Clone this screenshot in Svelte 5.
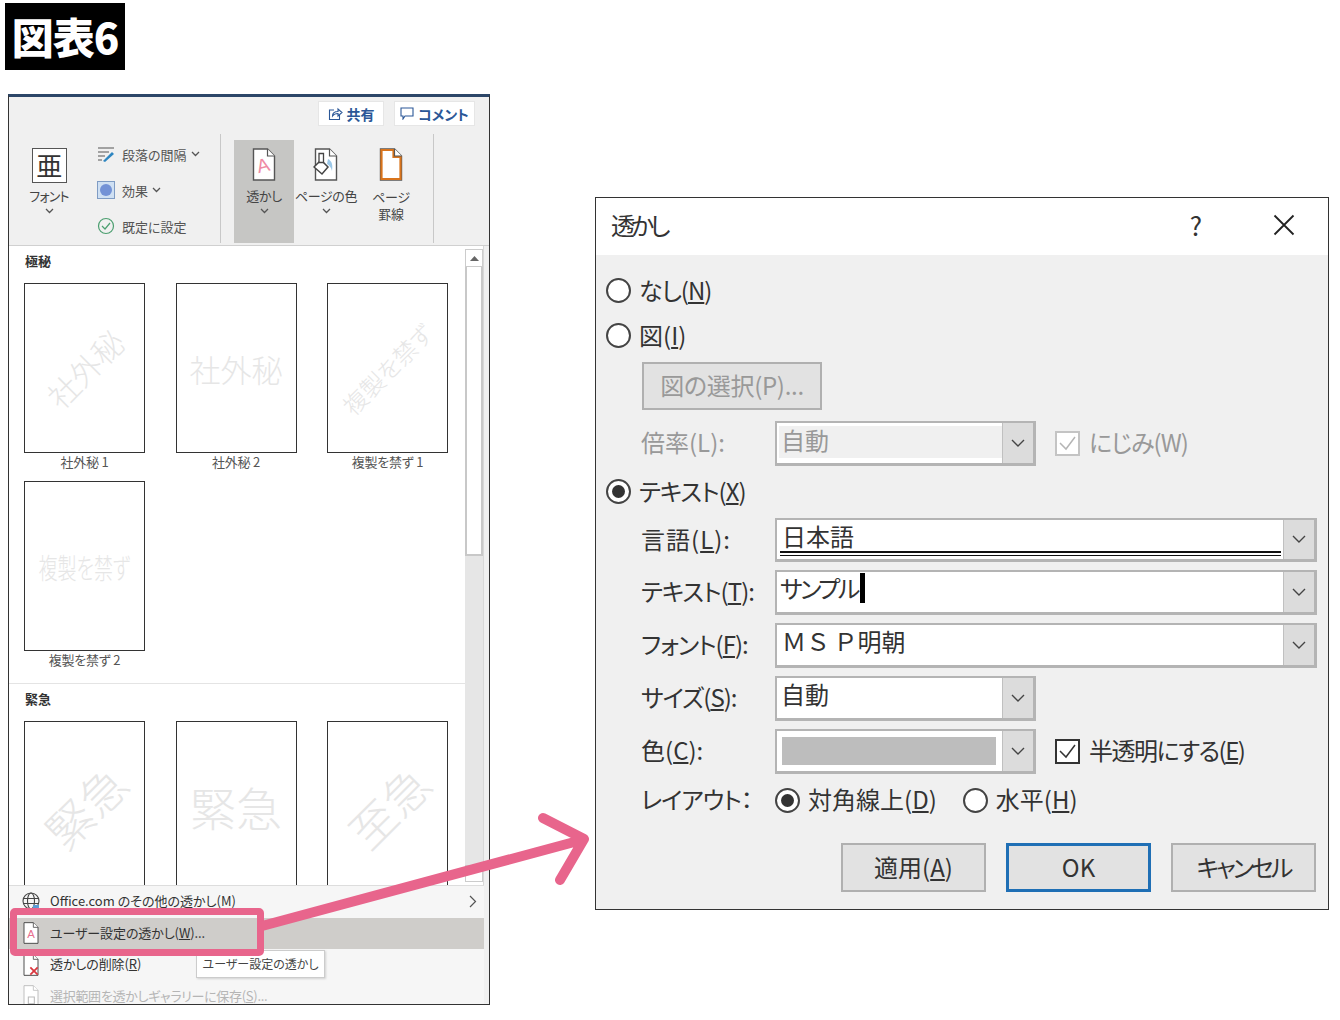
<script lang="ts">
	const groups = [
		{
			title: '極秘',
			items: [
				{ mark: '社外秘', caption: '社外秘 1', cls: 'diag big' },
				{ mark: '社外秘', caption: '社外秘 2', cls: 'flat big' },
				{ mark: '複製を禁ず', caption: '複製を禁ず 1', cls: 'diag mid' },
				{ mark: '複製を禁ず', caption: '複製を禁ず 2', cls: 'flat tall' }
			]
		},
		{
			title: '緊急',
			items: [
				{ mark: '緊急', cls: 'diag huge' },
				{ mark: '緊急', cls: 'flat huge' },
				{ mark: '至急', cls: 'diag huge' }
			]
		}
	];
</script>

{#snippet chevron()}
	<svg class="chev" width="9" height="6" viewBox="0 0 9 6"><path d="M1 1l3.5 3.5L8 1" fill="none" stroke="#555" stroke-width="1.3" /></svg>
{/snippet}

{#snippet caret()}
	<span class="caret">
		<svg width="14" height="9" viewBox="0 0 14 9"><path d="M1 1l6 6 6-6" fill="none" stroke="#444" stroke-width="1.4" /></svg>
	</span>
{/snippet}

{#snippet radio(checked: boolean)}
	<span class="radio" class:checked></span>
{/snippet}

{#snippet pageIcon(stroke: string)}
	<path d="M1.5 1h14l7 7v24h-21z" fill="#fff" stroke={stroke} stroke-width="1.4" />
	<path d="M15.5 1v7h7" fill="#fff" stroke={stroke} stroke-width="1.2" />
{/snippet}

<div class="page">
	<div class="badge">図表6</div>

	<div class="columns">
		<section class="word">
			<div class="ribbon">
				<div class="share-row">
					<button class="share">
						<svg width="15" height="14" viewBox="0 0 15 14"><path d="M6 3H1.5v9.5h10V8M4.5 9c0-3 2-4.5 5.5-4.5V2l4 3.500-4 3.500V6.500C7.500 6.500 5.500 7.500 4.500 9z" fill="none" stroke="#2b5797" stroke-width="1.100" /></svg>
						共有
					</button>
					<button class="share comment">
						<svg width="14" height="13" viewBox="0 0 14 13"><path d="M1 1h12v8H5l-2 3V9H1z" fill="none" stroke="#2b5797" stroke-width="1.100" /></svg>
						コメント
					</button>
				</div>
				<div class="tools">
					<div class="tool-group first">
						<div class="big-btn font-btn">
							<span class="font-box">亜</span>
							<span class="narrow-label">フォント</span>
							{@render chevron()}
						</div>
						<div class="small-col">
							<div class="small-btn">
								<svg width="18" height="18" viewBox="0 0 18 18"><path d="M1 3h16M1 7h11M1 11h7M1 15h4" stroke="#555" stroke-width="1.200" /><path d="M6 16l9-9 2 2-9 8z" fill="#2e86c1" /></svg>
								段落の間隔 {@render chevron()}
							</div>
							<div class="small-btn">
								<span class="effect"><i></i></span>
								効果 {@render chevron()}
							</div>
							<div class="small-btn">
								<svg width="18" height="18" viewBox="0 0 18 18"><circle cx="9" cy="9" r="7.500" fill="none" stroke="#4c9f70" stroke-width="1.200" /><path d="M5 9l3 3 5-6" fill="none" stroke="#4c9f70" stroke-width="1.200" /></svg>
								既定に設定
							</div>
						</div>
					</div>
					<div class="tool-group second">
						<div class="big-btn wm-btn active">
							<svg width="24" height="33" viewBox="0 0 24 33">
								{@render pageIcon('#555')}
								<text x="11" y="24" font-size="19" text-anchor="middle" fill="#ef8aa4" font-family="Liberation Sans" transform="rotate(-14 11 18)">A</text>
							</svg>
							<span>透かし</span>
							{@render chevron()}
						</div>
						<div class="big-btn color-btn">
							<svg width="26" height="33" viewBox="0 0 24 33">
								{@render pageIcon('#555')}
								<path d="M0 19l7-7 7 7-6 7z" fill="#fff" stroke="#444" stroke-width="1.500" />
								<path d="M5 5.500h4.500v9H5z" fill="#fff" stroke="#444" stroke-width="1.300" />
								<path d="M14 11c4 2 5 6 4 12-1-4-3-6-5-7z" fill="#9cc8e8" />
							</svg>
							<span>ページの色</span>
							{@render chevron()}
						</div>
						<div class="big-btn border-btn">
							<svg width="24" height="33" viewBox="0 0 24 33">
								{@render pageIcon('#555')}
								<path d="M2.500 2h12v7h7v22h-19z" fill="#fff" stroke="#d9741c" stroke-width="2.200" />
								<path d="M15.500 1v7h7" fill="#fff" stroke="#555" stroke-width="1.200" />
							</svg>
							<span>ページ<br />罫線</span>
						</div>
					</div>
				</div>
			</div>

			<div class="gallery">
				<div class="gallery-scroll">
					{#each groups as group}
						<div class="gallery-group">
							<h4>{group.title}</h4>
							<div class="thumbs">
								{#each group.items as item}
									<figure>
										<div class="thumb"><span class={item.cls}>{item.mark}</span></div>
										{#if item.caption}<figcaption>{item.caption}</figcaption>{/if}
									</figure>
								{/each}
							</div>
						</div>
					{/each}
				</div>
				<div class="scrollbar">
					<span class="arrow-btn"><svg width="9" height="5" viewBox="0 0 9 5"><path d="M4.500 0L9 5H0z" fill="#666" /></svg></span>
					<span class="thumb-bar"></span>
					<span class="track"></span>
					<span class="arrow-btn down"></span>
				</div>
			</div>

			<ul class="menu">
				<li class="office">
					<svg width="20" height="20" viewBox="0 0 20 20"><g fill="none" stroke="#444" stroke-width="1.100"><circle cx="10" cy="9" r="8" /><ellipse cx="10" cy="9" rx="3.500" ry="8" /><path d="M2 6.500h16M2 11.500h16" /></g><path d="M12 13h6v4h-6z" fill="#5b9bd5" /></svg>
					<span>Office.com のその他の透かし(M)</span>
					<svg class="more" width="8" height="13" viewBox="0 0 8 13"><path d="M1 1l5.500 5.500L1 12" fill="none" stroke="#555" stroke-width="1.200" /></svg>
				</li>
				<li class="hover">
					<svg width="20" height="22" viewBox="0 0 24 33">
						{@render pageIcon('#444')}
						<text x="12" y="24" font-size="17" text-anchor="middle" fill="#e8708f" font-family="Liberation Sans">A</text>
					</svg>
					<span>ユーザー設定の透かし(<u>W</u>)...</span>
				</li>
				<li>
					<svg width="20" height="22" viewBox="0 0 24 33">
						{@render pageIcon('#444')}
						<path d="M11 20l11 11M22 20L11 31" stroke="#d9363e" stroke-width="2.600" />
					</svg>
					<span>透かしの削除(<u>R</u>)</span>
				</li>
				<li class="disabled">
					<svg width="20" height="22" viewBox="0 0 24 33">
						{@render pageIcon('#bbb')}
						<path d="M8 18h9v10H8z" fill="none" stroke="#bbb" stroke-width="1.600" />
					</svg>
					<span>選択範囲を透かしギャラリーに保存(<u>S</u>)...</span>
				</li>
			</ul>
			<div class="tooltip">ユーザー設定の透かし</div>
		</section>

		<section class="dialog">
			<header>
				<span class="dlg-title">透かし</span>
				<span class="help">?</span>
				<svg class="close" width="22" height="22" viewBox="0 0 22 22"><path d="M1.500 1.500l19 19M20.500 1.500l-19 19" stroke="#222" stroke-width="1.800" /></svg>
			</header>
			<div class="dlg-body">
				<div class="opt none">{@render radio(false)}<span class="tight">なし(<u>N</u>)</span></div>
				<div class="opt pic">{@render radio(false)}<span>図(<u>I</u>)</span></div>
				<button class="pick" disabled>図の選択(P)...</button>

				<div class="field scale off">
					<label>倍率(L):</label>
					<div class="combo narrow disabled"><span class="val">自動</span>{@render caret()}</div>
					<span class="check disabled">
						<svg width="19" height="17" viewBox="0 0 19 17"><path d="M2 8l6 6L17 2" fill="none" stroke="#b5b5b5" stroke-width="1.500" /></svg>
					</span>
					<span class="side tight">にじみ(W)</span>
				</div>

				<div class="opt text">{@render radio(true)}<span class="tight">テキスト(<u>X</u>)</span></div>

				<div class="field lang">
					<label class="wide-label">言語(<u>L</u>):</label>
					<div class="combo wide"><span class="val lined">日本語</span>{@render caret()}</div>
				</div>
				<div class="field">
					<label class="tight">テキスト(<u>T</u>):</label>
					<div class="combo wide"><span class="val sample">サンプル<i class="cursor"></i></span>{@render caret()}</div>
				</div>
				<div class="field">
					<label class="tight">フォント(<u>F</u>):</label>
					<div class="combo wide"><span class="val mincho">ＭＳ Ｐ明朝</span>{@render caret()}</div>
				</div>
				<div class="field">
					<label class="tight">サイズ(<u>S</u>):</label>
					<div class="combo narrow"><span class="val">自動</span>{@render caret()}</div>
				</div>
				<div class="field">
					<label>色(<u>C</u>):</label>
					<div class="combo narrow"><span class="swatch"></span>{@render caret()}</div>
					<span class="check">
						<svg width="19" height="17" viewBox="0 0 19 17"><path d="M2 8l6 6L17 2" fill="none" stroke="#333" stroke-width="1.500" /></svg>
					</span>
					<span class="side tighter">半透明にする(<u>E</u>)</span>
				</div>
				<div class="field layout">
					<label class="tight">レイアウト：</label>
					{@render radio(true)}
					<span class="lay-label">対角線上(<u>D</u>)</span>
					{@render radio(false)}
					<span class="side">水平(<u>H</u>)</span>
				</div>

				<div class="actions">
					<button>適用(<u>A</u>)</button>
					<button class="primary">OK</button>
					<button class="cancel">キャンセル</button>
				</div>
			</div>
		</section>
	</div>

	<div class="callout"></div>
	<svg class="arrow" width="1340" height="1020" viewBox="0 0 1340 1020">
		<path d="M262 926L578 841M543 818l41 21-24 41" fill="none" stroke="#e8658c" stroke-width="10" stroke-linecap="round" stroke-linejoin="round" />
	</svg>
</div>

<style>
	:global(body) {
		background: #fff;
	}
	.page {
		position: relative;
		width: 1340px;
		height: 1020px;
		overflow: hidden;
		font-family: 'Noto Sans CJK JP', 'Noto Sans', sans-serif;
		font-feature-settings: 'palt';
		color: #333;
	}
	.badge {
		width: 120px;
		height: 67px;
		margin: 3px 0 0 5px;
		background: #000;
		color: #fff;
		font-size: 42px;
		font-weight: 900;
		line-height: 65px;
		text-align: center;
		letter-spacing: -1px;
	}
	.columns {
		display: flex;
		align-items: flex-start;
		margin: 24px 0 0 8px;
	}

	/* ── Word panel ── */
	.word {
		position: relative;
		width: 482px;
		height: 911px;
		box-sizing: border-box;
		border: 1px solid #333;
		border-top: 3px solid #2c4668;
		background: #f0f0f0;
		overflow: hidden;
		display: flex;
		flex-direction: column;
		font-size: 13px;
	}
	.ribbon {
		height: 149px;
		flex: none;
		border-bottom: 1px solid #d0d0d0;
		box-sizing: border-box;
	}
	.share-row {
		display: flex;
		justify-content: flex-end;
		gap: 10px;
		padding: 4px 14px 0 0;
	}
	.share {
		width: 66px;
		height: 25px;
		border: 1px solid #e6e6e6;
		background: #fff;
		display: flex;
		align-items: center;
		justify-content: center;
		gap: 4px;
		padding: 0;
		font: 700 14px 'Noto Sans CJK JP', sans-serif;
		font-feature-settings: 'palt';
		color: #2b5797;
	}
	.share.comment {
		width: 81px;
	}
	.tools {
		display: flex;
		height: 109px;
		margin-top: 8px;
	}
	.tool-group {
		display: flex;
		border-right: 1px solid #c8c8c8;
		box-sizing: border-box;
		height: 109px;
		width: 212px;
	}
	.tool-group.first {
		gap: 23px;
		padding: 14px 0 0 15px;
	}
	.tool-group.second {
		padding: 6px 0 0 13px;
		width: 213px;
	}
	.big-btn {
		display: flex;
		flex-direction: column;
		align-items: center;
		font-size: 13px;
		line-height: 16px;
		color: #444;
		white-space: nowrap;
		letter-spacing: -0.3px;
	}
	.big-btn svg:first-child {
		margin-bottom: 7px;
	}
	.font-btn {
		width: 50px;
	}
	.narrow-label {
		letter-spacing: -0.8px;
	}
	.font-box {
		width: 35px;
		height: 35px;
		box-sizing: border-box;
		border: 1px solid #555;
		background: #fff;
		font-size: 26px;
		line-height: 32px;
		text-align: center;
		color: #333;
		margin-bottom: 5px;
	}
	.wm-btn {
		width: 60px;
		height: 103px;
		padding-top: 8px;
		box-sizing: border-box;
	}
	.wm-btn.active {
		background: #c6c6c4;
	}
	.color-btn {
		width: 62px;
		padding-top: 8px;
		margin-left: 1px;
		letter-spacing: -0.4px;
	}
	.border-btn {
		width: 64px;
		padding-top: 8px;
		margin-left: 2px;
		text-align: center;
		line-height: 17px;
	}
	.chev {
		margin-top: 4px;
		flex: none;
	}
	.small-col {
		display: flex;
		flex-direction: column;
		gap: 18px;
		margin-top: -3px;
	}
	.small-btn {
		display: flex;
		align-items: center;
		gap: 7px;
		height: 18px;
		color: #555;
		white-space: nowrap;
	}
	.small-btn .chev {
		margin: 0 0 0 -3px;
	}
	.effect {
		width: 18px;
		height: 18px;
		box-sizing: border-box;
		background: #cfe0f3;
		border: 1px solid #7f9cc4;
		display: flex;
		align-items: center;
		justify-content: center;
	}
	.effect i {
		width: 12px;
		height: 12px;
		border-radius: 50%;
		background: #7392d6;
	}

	.gallery {
		position: relative;
		height: 639px;
		flex: none;
		width: 475px;
		background: #fff;
		border-right: 1px solid #d8d8d8;
		overflow: hidden;
		box-sizing: border-box;
		display: flex;
	}
	.gallery-scroll {
		width: 456px;
	}
	.gallery-group + .gallery-group {
		border-top: 1px solid #e4e4e4;
		margin-top: 12px;
	}
	.gallery-group h4 {
		margin: 0;
		height: 37px;
		padding: 6px 0 0 16px;
		box-sizing: border-box;
		font-size: 13px;
		line-height: 18px;
		font-weight: 700;
		color: #333;
	}
	.thumbs {
		display: grid;
		grid-template-columns: repeat(3, 121px);
		column-gap: 30.500px;
		row-gap: 8px;
		padding-left: 15px;
	}
	figure {
		margin: 0;
	}
	figcaption {
		height: 20px;
		line-height: 18px;
		text-align: center;
		font-size: 13px;
		color: #555;
		letter-spacing: -0.2px;
	}
	.thumb {
		width: 121px;
		height: 170px;
		box-sizing: border-box;
		border: 1.500px solid #333;
		background: #fff;
		display: flex;
		align-items: center;
		justify-content: center;
		overflow: hidden;
	}
	.thumb span {
		color: #e6e6e6;
		white-space: nowrap;
		font-weight: 300;
	}
	.thumb .diag {
		transform: rotate(-45deg);
	}
	.thumb .big {
		font-size: 31px;
	}
	.thumb .mid {
		font-size: 24px;
	}
	.thumb .tall {
		font-size: 19px;
		transform: scaleY(1.500);
	}
	.thumb .huge {
		font-size: 46px;
	}

	.scrollbar {
		width: 18px;
		margin-top: 3px;
		display: flex;
		flex-direction: column;
		height: 633px;
		flex: none;
	}
	.arrow-btn {
		height: 18px;
		display: flex;
		align-items: center;
		justify-content: center;
		border: 1px solid #ccc;
		box-sizing: border-box;
		flex: none;
		background: #fff;
	}
	.thumb-bar {
		height: 289px;
		box-sizing: border-box;
		border: 2px solid #c8c8c8;
		border-top-width: 0;
		background: #fff;
		flex: none;
	}
	.track {
		flex: 1;
		background: #e6e6e6;
	}
	.arrow-btn.down {
		height: 17px;
	}

	.menu {
		list-style: none;
		margin: 0;
		padding: 0;
		border-top: 1px solid #ddd;
		width: 475px;
		font-size: 13px;
		background: #f6f6f6;
		flex: 1;
		letter-spacing: -0.1px;
	}
	.menu li {
		position: relative;
		height: 31.500px;
		display: flex;
		align-items: center;
		gap: 9px;
		padding-left: 12px;
		color: #333;
		white-space: nowrap;
	}
	.menu li span {
		position: relative;
		top: -1px;
	}
	.menu li.office {
		letter-spacing: 0;
	}
	.menu li.hover {
		background: #cfcdca;
	}
	.menu li.disabled {
		color: #b5b5b5;
		letter-spacing: -0.3px;
	}
	.more {
		position: absolute;
		right: 7px;
		top: 9px;
	}
	.tooltip {
		position: absolute;
		left: 187px;
		top: 853px;
		width: 129px;
		height: 28px;
		box-sizing: border-box;
		border: 1px solid #ccc;
		box-shadow: 1px 1px 2px rgba(0, 0, 0, 0.15);
		background: #fff;
		color: #444;
		font-size: 12px;
		line-height: 25px;
		text-align: center;
		white-space: nowrap;
	}

	/* ── Dialog ── */
	.dialog {
		width: 734px;
		height: 713px;
		margin: 103px 0 0 105px;
		box-sizing: border-box;
		border: 1.500px solid #333;
		background: #f0f0f0;
		flex: none;
		font-size: 24px;
		color: #333;
	}
	header {
		height: 57px;
		background: #fff;
		display: flex;
		align-items: center;
		padding: 0 0 4px 15px;
		box-sizing: border-box;
		font-size: 24px;
	}
	.dlg-title {
		flex: 1;
		letter-spacing: -4px;
	}
	.help {
		font-size: 26px;
		font-weight: 400;
		margin-right: 71px;
	}
	.close {
		margin-right: 33px;
	}
	.dlg-body {
		height: 654px;
		padding-left: 10px;
		box-sizing: border-box;
	}
	.tight {
		letter-spacing: -1px;
	}
	.tighter {
		letter-spacing: -1.500px;
	}
	.opt {
		display: flex;
		align-items: center;
		height: 36px;
		white-space: pre;
	}
	.opt span:last-child {
		position: relative;
		top: -1px;
	}
	.opt.none {
		margin-top: 17px;
	}
	.opt.pic {
		margin-top: 9px;
	}
	.opt.text {
		margin-top: 7px;
	}
	.radio {
		width: 25px;
		height: 25px;
		box-sizing: border-box;
		border: 2px solid #444;
		border-radius: 50%;
		background: #fff;
		margin-right: 8px;
		flex: none;
		position: relative;
	}
	.radio.checked::after {
		content: '';
		position: absolute;
		inset: 4px;
		border-radius: 50%;
		background: #333;
	}
	.pick {
		display: block;
		width: 180px;
		height: 48px;
		margin: 9px 0 0 36px;
		padding: 0 0 4px;
		border: 2px solid #b0b0b0;
		background: #e2e2e2;
		color: #999;
		font: 24px 'Noto Sans CJK JP', sans-serif;
		font-feature-settings: 'palt';
		letter-spacing: -0.3px;
	}
	.field {
		display: flex;
		align-items: center;
		height: 45px;
		margin-top: 8px;
		padding-left: 35px;
		white-space: pre;
	}
	.field label {
		width: 134px;
		flex: none;
		padding-bottom: 4px;
		box-sizing: border-box;
	}
	.field .side {
		padding-bottom: 4px;
	}
	.wide-label {
		letter-spacing: 1px;
	}
	.field.scale {
		margin-top: 11px;
		color: #999;
	}
	.field.lang {
		margin-top: 9px;
		height: 44px;
	}
	.field.layout {
		margin-top: 4px;
	}
	.combo {
		height: 100%;
		box-sizing: border-box;
		border: 2px solid #b4b4b4;
		border-right-width: 3px;
		border-bottom-width: 3px;
		background: #fff;
		display: flex;
		align-items: stretch;
		flex: none;
		color: #333;
	}
	.combo.narrow {
		width: 261px;
		margin-right: 19px;
	}
	.combo.wide {
		width: 542px;
	}
	.combo.disabled {
		color: #999;
	}
	.combo.disabled .val {
		background: #f0f0f0;
		margin: 3px 0 5px 2px;
		padding-left: 2px;
		line-height: 28px;
	}
	.val {
		flex: 1;
		padding-left: 4px;
		line-height: 32px;
		position: relative;
	}
	.val.lined {
		padding-left: 5px;
	}
	.val.lined::after {
		content: '';
		position: absolute;
		left: 3px;
		right: 2px;
		bottom: 3px;
		height: 2px;
		border-top: 2px solid #111;
		border-bottom: 1px solid #111;
	}
	.val.sample {
		padding-left: 3px;
		letter-spacing: -2.500px;
	}
	.val.mincho {
		font-feature-settings: normal;
		padding-left: 5px;
		word-spacing: -2px;
	}
	.cursor {
		display: inline-block;
		width: 5px;
		height: 30px;
		margin-left: 2px;
		background: #000;
		vertical-align: -5px;
	}
	.swatch {
		flex: 1;
		margin: 6px 6px 6px 5px;
		background: #bdbdbd;
	}
	.caret {
		width: 30px;
		flex: none;
		background: #dcdcdc;
		border-left: 1px solid #c0c0c0;
		display: flex;
		align-items: center;
		justify-content: center;
	}
	.check {
		width: 25px;
		height: 25px;
		box-sizing: border-box;
		border: 2px solid #333;
		background: #fff;
		margin-right: 9px;
		display: flex;
		align-items: center;
		justify-content: center;
		flex: none;
	}
	.check.disabled {
		border-color: #c4c4c4;
	}
	.lay-label {
		margin-right: 26px;
		padding-bottom: 4px;
	}
	.actions {
		display: flex;
		justify-content: flex-end;
		gap: 20px;
		margin-top: 20px;
		padding-right: 12px;
	}
	.actions button {
		width: 145px;
		height: 49px;
		padding: 0 0 2px;
		box-sizing: border-box;
		border: 2px solid #b0b0b0;
		background: #e2e2e2;
		color: #333;
		font: 24px 'Noto Sans CJK JP', sans-serif;
		font-feature-settings: 'palt';
	}
	.actions button.primary {
		border: 3px solid #1f6fb5;
	}
	.actions button.cancel {
		letter-spacing: -3px;
	}

	/* ── Overlays ── */
	.callout {
		position: absolute;
		left: 10px;
		top: 908px;
		width: 254px;
		height: 48px;
		box-sizing: border-box;
		border: 7px solid #e8658c;
		border-radius: 5px;
	}
	.arrow {
		position: absolute;
		inset: 0;
		pointer-events: none;
	}
</style>
